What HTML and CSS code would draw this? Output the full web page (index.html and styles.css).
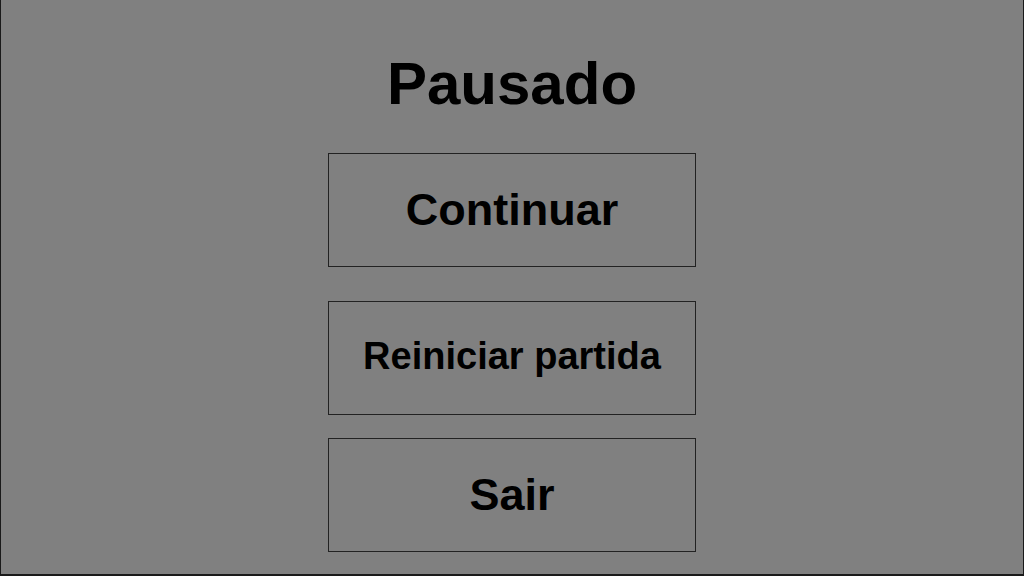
FILE: index.html
```html
<!DOCTYPE html>
<html lang="pt">
<head>
<meta charset="utf-8">
<title>Pausado</title>
<link rel="stylesheet" href="styles.css">
</head>
<body>
<main class="pause-screen">
  <h1 class="pause-title">Pausado</h1>
  <div class="menu">
    <button class="menu-btn menu-btn--continue">Continuar</button>
    <button class="menu-btn menu-btn--restart">Reiniciar partida</button>
    <button class="menu-btn menu-btn--exit">Sair</button>
  </div>
</main>
</body>
</html>
```
FILE: styles.css
```css
html, body {
  margin: 0;
  padding: 0;
  background: #808080;
}
.pause-screen {
  box-sizing: border-box;
  width: 1024px;
  height: 576px;
  border: 1px solid #1a1a1a;
  border-bottom-width: 2px;
  border-top: 0;
  background: #808080;
  display: flex;
  flex-direction: column;
  align-items: center;
  padding-top: 54px;
  font-family: "Liberation Sans", Arial, sans-serif;
  color: #000;
}
.pause-title {
  margin: 0 0 39px 0;
  font-size: 60px;
  line-height: 60px;
  font-weight: bold;
}
.menu {
  display: flex;
  flex-direction: column;
  align-items: center;
}
.menu-btn {
  box-sizing: border-box;
  width: 368px;
  height: 114px;
  border: 1px solid #222;
  background: transparent;
  font-family: "Liberation Sans", Arial, sans-serif;
  font-weight: bold;
  color: #000;
  padding: 0;
  margin: 0;
}
.menu-btn--continue { font-size: 45px; margin-bottom: 34px; }
.menu-btn--restart { font-size: 38px; margin-bottom: 23px; padding-bottom: 4px; }
.menu-btn--exit { font-size: 45px; }
```
